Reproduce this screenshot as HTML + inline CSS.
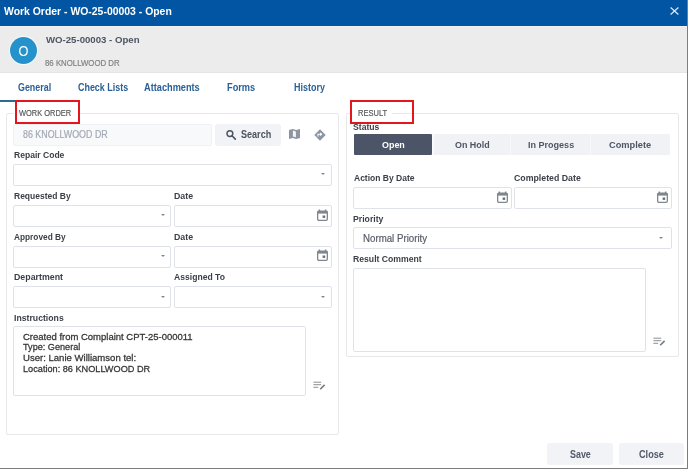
<!DOCTYPE html>
<html><head><meta charset="utf-8">
<style>
*{box-sizing:border-box;margin:0;padding:0}
html,body{width:688px;height:469px;overflow:hidden;background:#fff;font-family:"Liberation Sans",sans-serif;position:relative}
.a{position:absolute}
.x{position:absolute;white-space:nowrap;transform-origin:0 0}
.inp{position:absolute;border:1px solid #dfe3e9;border-radius:2px;background:#fff}
.fs{position:absolute;border:1px solid #e8e8ea;border-radius:2px}
.red{position:absolute;border:2px solid #e3151d}
.btn{position:absolute;background:#f1f3f6;border-radius:3px}
.caret{position:absolute;width:0;height:0;border-left:2.6px solid transparent;border-right:2.6px solid transparent;border-top:2.8px solid #80858e}
svg{position:absolute;overflow:visible}
#w{position:absolute;left:0;top:0;width:688px;height:469px;will-change:transform}

</style></head><body><div id="w">
<div class="a" style="left:0;top:0;width:688px;height:26px;background:#0155a3"></div>
<svg style="left:670px;top:7.2px" width="9" height="8" viewBox="0 0 9 8"><path d="M0.6 0.5L8.4 7.5M8.4 0.5L0.6 7.5" stroke="#dae5f3" stroke-width="1.25"/></svg>
<div class="a" style="left:0;top:26px;width:688px;height:47px;background:#ececec;border-top:1px solid #f3f2f5;border-bottom:1px solid #e5e5e5"></div>
<div class="a" style="left:10.3px;top:37.2px;width:27.2px;height:27px;border-radius:50%;background:#2692cb;box-shadow:0 0 0 1px #f7f9fc"></div>
<div class="a" style="left:9.9px;top:37.8px;width:27px;height:27px;font-size:14.2px;line-height:27px;text-align:center;color:#fff;transform:scaleX(0.9)">O</div>

<div class="a" style="left:0;top:100px;width:68px;height:2px;background:#2d6b97"></div>

<div class="fs" style="left:6px;top:113px;width:333px;height:322px"></div>
<div class="fs" style="left:346px;top:113px;width:333px;height:244px"></div>
<div class="a" style="left:14px;top:108px;width:66px;height:8px;background:#fff"></div>
<div class="a" style="left:352px;top:108px;width:40px;height:8px;background:#fff"></div>

<!-- address row -->
<div class="inp" style="left:13px;top:124px;width:199px;height:22px;background:#f8f9fb;border-color:#eff1f4"></div>
<div class="btn" style="left:215px;top:124px;width:66px;height:22px"></div>
<svg style="left:225px;top:130px" width="12" height="10" viewBox="0 0 12 10"><circle cx="4.9" cy="3.6" r="2.9" fill="none" stroke="#4b5261" stroke-width="1.45"/><path d="M7 5.8L10.3 9.1" stroke="#4b5261" stroke-width="1.6" stroke-linecap="round"/></svg>
<svg style="left:289px;top:129.3px" width="11" height="10" viewBox="0 0 11 10"><path d="M0 1L3.6 0L7.2 1L11 0V9L7.2 10L3.6 9L0 10Z" fill="#8d95a1"/><path d="M3.9 1.6L6.9 2.5V8.3L3.9 7.4Z" fill="#f4f5f7"/></svg>
<svg style="left:314px;top:129px" width="12" height="12" viewBox="0 0 12 12"><path d="M6 0.3L11.7 6L6 11.7L0.3 6Z" fill="#8d95a1"/><path d="M4 7.5V5.3H7.3M6.2 4L7.5 5.3L6.2 6.6" stroke="#fff" stroke-width="1.1" fill="none"/></svg>

<div class="inp" style="left:13px;top:164px;width:319px;height:22px"></div>
<div class="caret" style="left:320.7px;top:173px"></div>

<div class="inp" style="left:13px;top:205px;width:158px;height:22px"></div>
<div class="caret" style="left:160.7px;top:214px"></div>
<div class="inp" style="left:174px;top:205px;width:158px;height:22px"></div>
<div class="inp" style="left:13px;top:246px;width:158px;height:22px"></div>
<div class="caret" style="left:160.7px;top:255px"></div>
<div class="inp" style="left:174px;top:246px;width:158px;height:22px"></div>
<div class="inp" style="left:13px;top:286px;width:158px;height:22px"></div>
<div class="caret" style="left:160.7px;top:295.5px"></div>
<div class="inp" style="left:174px;top:286px;width:158px;height:22px"></div>
<div class="caret" style="left:320.7px;top:295.5px"></div>

<div class="inp" style="left:13px;top:326px;width:293px;height:70px"></div>

<!-- right -->
<div class="a" style="left:354px;top:133.5px;width:78px;height:21.5px;background:#4b5567;border-radius:1px"></div>
<div class="a" style="left:432px;top:133.5px;width:238px;height:21.5px;background:#f1f2f5;border-radius:0 1px 1px 0"></div>
<div class="a" style="left:432px;top:133.5px;width:1.5px;height:21.5px;background:#f9fafb"></div>
<div class="a" style="left:510px;top:133.5px;width:1px;height:21.5px;background:#f7f8fa"></div>
<div class="a" style="left:589.5px;top:133.5px;width:1px;height:21.5px;background:#f7f8fa"></div>

<div class="inp" style="left:353px;top:187px;width:159px;height:22px"></div>
<div class="inp" style="left:514px;top:187px;width:158px;height:22px"></div>
<div class="inp" style="left:353px;top:227px;width:319px;height:22px"></div>
<div class="caret" style="left:659.2px;top:237px"></div>
<div class="inp" style="left:353px;top:268px;width:293px;height:84px"></div>

<div class="btn" style="left:547px;top:443px;width:66px;height:21.5px"></div>
<div class="btn" style="left:618.5px;top:443px;width:65.5px;height:21.5px"></div>

<div class="a" style="left:0;top:468px;width:688px;height:1px;background:#7d7d7d"></div>
<div class="a" style="left:687px;top:0;width:1px;height:469px;background:#7d7d7d"></div>

<div class="red" style="left:15.2px;top:100px;width:65.3px;height:24px"></div>
<div class="red" style="left:350px;top:100px;width:63.5px;height:23.5px"></div>
<svg style="left:316.5px;top:208.8px" width="11" height="12" viewBox="0 0 11 12"><rect x="0.65" y="2.15" width="9.7" height="9.2" rx="1.3" fill="none" stroke="#80868f" stroke-width="1.3"/><rect x="0.6" y="2" width="9.8" height="2.6" fill="#80868f"/><rect x="1.6" y="0.5" width="1.5" height="2" fill="#80868f"/><rect x="7.9" y="0.5" width="1.5" height="2" fill="#80868f"/><rect x="5.6" y="6.5" width="2.6" height="2.4" fill="#6a707a"/></svg>
<svg style="left:316.5px;top:249.3px" width="11" height="12" viewBox="0 0 11 12"><rect x="0.65" y="2.15" width="9.7" height="9.2" rx="1.3" fill="none" stroke="#80868f" stroke-width="1.3"/><rect x="0.6" y="2" width="9.8" height="2.6" fill="#80868f"/><rect x="1.6" y="0.5" width="1.5" height="2" fill="#80868f"/><rect x="7.9" y="0.5" width="1.5" height="2" fill="#80868f"/><rect x="5.6" y="6.5" width="2.6" height="2.4" fill="#6a707a"/></svg>
<svg style="left:496.8px;top:191.2px" width="11" height="12" viewBox="0 0 11 12"><rect x="0.65" y="2.15" width="9.7" height="9.2" rx="1.3" fill="none" stroke="#80868f" stroke-width="1.3"/><rect x="0.6" y="2" width="9.8" height="2.6" fill="#80868f"/><rect x="1.6" y="0.5" width="1.5" height="2" fill="#80868f"/><rect x="7.9" y="0.5" width="1.5" height="2" fill="#80868f"/><rect x="5.6" y="6.5" width="2.6" height="2.4" fill="#6a707a"/></svg>
<svg style="left:656.5px;top:191.2px" width="11" height="12" viewBox="0 0 11 12"><rect x="0.65" y="2.15" width="9.7" height="9.2" rx="1.3" fill="none" stroke="#80868f" stroke-width="1.3"/><rect x="0.6" y="2" width="9.8" height="2.6" fill="#80868f"/><rect x="1.6" y="0.5" width="1.5" height="2" fill="#80868f"/><rect x="7.9" y="0.5" width="1.5" height="2" fill="#80868f"/><rect x="5.6" y="6.5" width="2.6" height="2.4" fill="#6a707a"/></svg>
<svg style="left:313.3px;top:381px" width="13" height="9" viewBox="0 0 13 9"><path d="M0.4 1.2H8.2M0.4 3.7H8.2M0.4 6.3H5.2" stroke="#8a8f96" stroke-width="1"/><path d="M7.2 8.3L11.6 3.9" stroke="#767b83" stroke-width="1.6"/></svg>
<svg style="left:653.2px;top:336.5px" width="13" height="9" viewBox="0 0 13 9"><path d="M0.4 1.2H8.2M0.4 3.7H8.2M0.4 6.3H5.2" stroke="#8a8f96" stroke-width="1"/><path d="M7.2 8.3L11.6 3.9" stroke="#767b83" stroke-width="1.6"/></svg>

<div class="x" style="left:4.30px;top:5.72px;font-size:11.19px;line-height:11.19px;color:#ffffff;font-weight:bold;transform:scaleX(0.9316);">Work Order - WO-25-00003 - Open</div>
<div class="x" style="left:45.60px;top:36.17px;font-size:9.01px;line-height:9.01px;color:#4d5462;font-weight:bold;transform:scaleX(1.0690);">WO-25-00003 - Open</div>
<div class="x" style="left:45.29px;top:58.86px;font-size:8.43px;line-height:8.43px;color:#838383;-webkit-text-stroke:0.2px #838383;transform:scaleX(0.9294);">86 KNOLLWOOD DR</div>
<div class="x" style="left:18.24px;top:83.01px;font-size:10.03px;line-height:10.03px;color:#2a6096;font-weight:bold;transform:scaleX(0.8878);">General</div>
<div class="x" style="left:78.24px;top:83.01px;font-size:10.03px;line-height:10.03px;color:#2a6096;font-weight:bold;transform:scaleX(0.8914);">Check Lists</div>
<div class="x" style="left:144.12px;top:83.01px;font-size:10.03px;line-height:10.03px;color:#2a6096;font-weight:bold;transform:scaleX(0.9189);">Attachments</div>
<div class="x" style="left:226.75px;top:83.01px;font-size:10.03px;line-height:10.03px;color:#2a6096;font-weight:bold;transform:scaleX(0.9196);">Forms</div>
<div class="x" style="left:294.06px;top:83.01px;font-size:10.03px;line-height:10.03px;color:#2a6096;font-weight:bold;transform:scaleX(0.8944);">History</div>
<div class="x" style="left:18.60px;top:108.79px;font-size:8.87px;line-height:8.87px;color:#5a5a5a;-webkit-text-stroke:0.2px #5a5a5a;transform:scaleX(0.8413);">WORK ORDER</div>
<div class="x" style="left:357.50px;top:108.82px;font-size:8.72px;line-height:8.72px;color:#5a5a5a;-webkit-text-stroke:0.2px #5a5a5a;transform:scaleX(0.8637);">RESULT</div>
<div class="x" style="left:23.14px;top:129.71px;font-size:10.03px;line-height:10.03px;color:#a2a9b4;-webkit-text-stroke:0.2px #a2a9b4;transform:scaleX(0.8867);">86 KNOLLWOOD DR</div>
<div class="x" style="left:241.42px;top:129.32px;font-size:10.61px;line-height:10.61px;color:#4b5261;font-weight:bold;transform:scaleX(0.8542);">Search</div>
<div class="x" style="left:13.79px;top:151.17px;font-size:9.01px;line-height:9.01px;color:#3a3f47;font-weight:bold;transform:scaleX(0.9502);">Repair Code</div>
<div class="x" style="left:13.69px;top:192.15px;font-size:9.16px;line-height:9.16px;color:#3a3f47;font-weight:bold;transform:scaleX(0.9282);">Requested By</div>
<div class="x" style="left:174.17px;top:192.15px;font-size:9.16px;line-height:9.16px;color:#3a3f47;font-weight:bold;transform:scaleX(0.9602);">Date</div>
<div class="x" style="left:14.03px;top:232.52px;font-size:9.30px;line-height:9.30px;color:#3a3f47;font-weight:bold;transform:scaleX(0.8919);">Approved By</div>
<div class="x" style="left:174.17px;top:232.52px;font-size:9.30px;line-height:9.30px;color:#3a3f47;font-weight:bold;transform:scaleX(0.9452);">Date</div>
<div class="x" style="left:13.67px;top:273.15px;font-size:9.16px;line-height:9.16px;color:#3a3f47;font-weight:bold;transform:scaleX(0.9621);">Department</div>
<div class="x" style="left:174.33px;top:273.15px;font-size:9.16px;line-height:9.16px;color:#3a3f47;font-weight:bold;transform:scaleX(0.9386);">Assigned To</div>
<div class="x" style="left:13.68px;top:313.55px;font-size:9.16px;line-height:9.16px;color:#3a3f47;font-weight:bold;transform:scaleX(0.9491);">Instructions</div>
<div class="x" style="left:23.12px;top:331.62px;font-size:9.90px;line-height:9.90px;color:#363636;-webkit-text-stroke:0.28px #363636;transform:scaleX(0.9605);">Created from Complaint CPT-25-000011</div>
<div class="x" style="left:23.42px;top:342.02px;font-size:9.90px;line-height:9.90px;color:#363636;-webkit-text-stroke:0.28px #363636;transform:scaleX(0.9239);">Type: General</div>
<div class="x" style="left:22.93px;top:352.82px;font-size:9.90px;line-height:9.90px;color:#363636;-webkit-text-stroke:0.28px #363636;transform:scaleX(0.9678);">User: Lanie Williamson tel:</div>
<div class="x" style="left:22.86px;top:363.72px;font-size:9.90px;line-height:9.90px;color:#363636;-webkit-text-stroke:0.28px #363636;transform:scaleX(0.9283);">Location: 86 KNOLLWOOD DR</div>
<div class="x" style="left:352.83px;top:123.02px;font-size:8.72px;line-height:8.72px;color:#3a3f47;font-weight:bold;transform:scaleX(0.9899);">Status</div>
<div class="x" style="left:381.94px;top:139.75px;font-size:9.74px;line-height:9.74px;color:#ffffff;font-weight:bold;transform:scaleX(0.9161);">Open</div>
<div class="x" style="left:454.94px;top:139.55px;font-size:9.74px;line-height:9.74px;color:#4d5563;font-weight:bold;transform:scaleX(0.9164);">On Hold</div>
<div class="x" style="left:527.96px;top:139.55px;font-size:9.74px;line-height:9.74px;color:#4d5563;font-weight:bold;transform:scaleX(0.9272);">In Progess</div>
<div class="x" style="left:609.33px;top:139.55px;font-size:9.74px;line-height:9.74px;color:#4d5563;font-weight:bold;transform:scaleX(0.9514);">Complete</div>
<div class="x" style="left:353.83px;top:173.95px;font-size:9.16px;line-height:9.16px;color:#3a3f47;font-weight:bold;transform:scaleX(0.9288);">Action By Date</div>
<div class="x" style="left:513.75px;top:173.95px;font-size:9.16px;line-height:9.16px;color:#3a3f47;font-weight:bold;transform:scaleX(0.9580);">Completed Date</div>
<div class="x" style="left:353.48px;top:214.48px;font-size:9.59px;line-height:9.59px;color:#3a3f47;font-weight:bold;transform:scaleX(0.9078);">Priority</div>
<div class="x" style="left:362.72px;top:233.29px;font-size:10.76px;line-height:10.76px;color:#575c65;-webkit-text-stroke:0.2px #575c65;transform:scaleX(0.9024);">Normal Priority</div>
<div class="x" style="left:353.48px;top:254.48px;font-size:9.59px;line-height:9.59px;color:#3a3f47;font-weight:bold;transform:scaleX(0.9032);">Result Comment</div>
<div class="x" style="left:569.82px;top:448.99px;font-size:10.76px;line-height:10.76px;color:#525968;font-weight:bold;transform:scaleX(0.8285);">Save</div>
<div class="x" style="left:639.33px;top:448.99px;font-size:10.76px;line-height:10.76px;color:#525968;font-weight:bold;transform:scaleX(0.8503);">Close</div>
</div></body></html>
